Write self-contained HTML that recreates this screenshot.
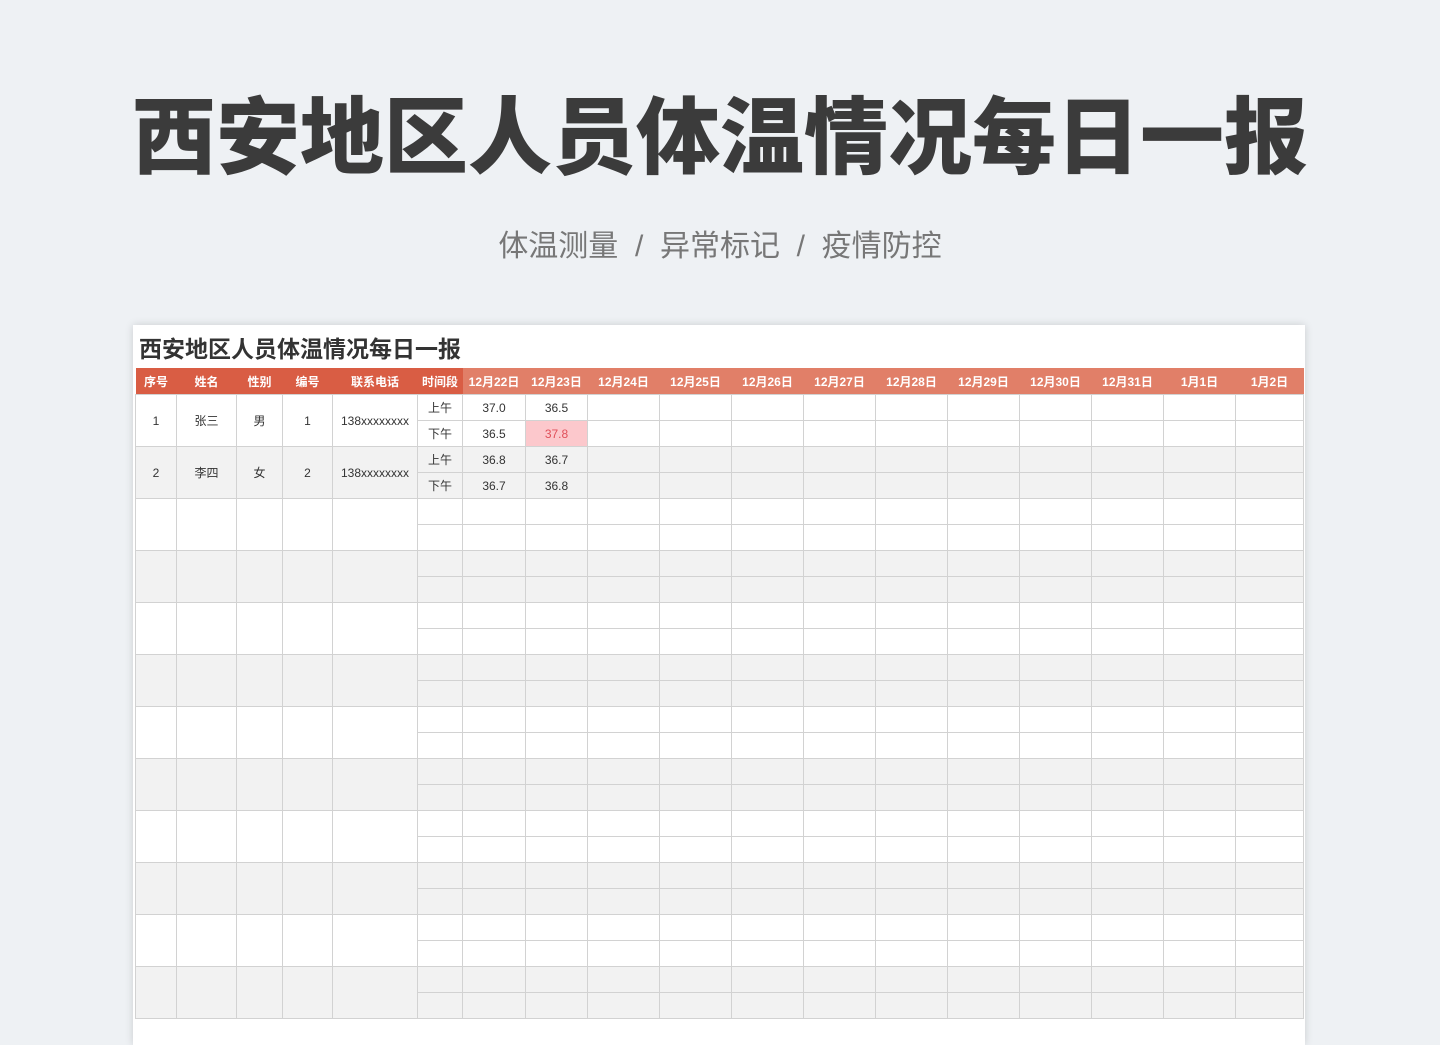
<!DOCTYPE html>
<html><head><meta charset="utf-8"><style>
body{margin:0;width:1440px;height:1018px;overflow:hidden;background:#eef1f4;font-family:"Liberation Sans","Noto Sans CJK SC",sans-serif;position:relative}
h1{position:absolute;top:83px;left:0;width:1440px;text-align:center;margin:0;font-size:84px;line-height:110px;font-weight:900;color:#3b3b3b}
.sub{position:absolute;top:227px;left:0;width:1440px;text-align:center;font-size:30px;color:#777;line-height:40px}
.card{position:absolute;left:133px;top:325px;width:1172px;height:720px;background:#fff;box-shadow:0 0 8px rgba(0,0,0,.15)}
.t{position:absolute;left:6px;top:10px;font-size:23px;font-weight:bold;color:#333;line-height:28px}
table{position:absolute;left:2px;top:43px;border-collapse:collapse;table-layout:fixed;width:1168px}
td,th{height:25px;padding:0;border:1px solid #d2d2d2;font-size:12px;color:#333;text-align:center;white-space:nowrap;overflow:hidden}
th{border:none;color:#fff;font-weight:bold;background:#d95d44;height:26px}
th.d{background:#e17f68}
tr.g td{background:#f2f2f2}
td.p{background:#fcc8cc!important;color:#e0505a}
</style></head><body>
<h1>西安地区人员体温情况每日一报</h1>
<div class="sub">体温测量 &nbsp;/&nbsp; 异常标记 &nbsp;/&nbsp; 疫情防控</div>
<div class="card"><div class="t">西安地区人员体温情况每日一报</div>
<table>
<colgroup><col style="width:41px"><col style="width:60px"><col style="width:46px"><col style="width:50px"><col style="width:85px"><col style="width:45px"><col style="width:63px"><col style="width:62px"><col style="width:72px"><col style="width:72px"><col style="width:72px"><col style="width:72px"><col style="width:72px"><col style="width:72px"><col style="width:72px"><col style="width:72px"><col style="width:72px"><col style="width:68px"></colgroup>
<tr><th>序号</th><th>姓名</th><th>性别</th><th>编号</th><th>联系电话</th><th>时间段</th><th class="d">12月22日</th><th class="d">12月23日</th><th class="d">12月24日</th><th class="d">12月25日</th><th class="d">12月26日</th><th class="d">12月27日</th><th class="d">12月28日</th><th class="d">12月29日</th><th class="d">12月30日</th><th class="d">12月31日</th><th class="d">1月1日</th><th class="d">1月2日</th></tr>
<tr><td rowspan="2">1</td><td rowspan="2">张三</td><td rowspan="2">男</td><td rowspan="2">1</td><td rowspan="2">138xxxxxxxx</td><td>上午</td><td>37.0</td><td>36.5</td><td></td><td></td><td></td><td></td><td></td><td></td><td></td><td></td><td></td><td></td></tr>
<tr><td>下午</td><td>36.5</td><td class="p">37.8</td><td></td><td></td><td></td><td></td><td></td><td></td><td></td><td></td><td></td><td></td></tr>
<tr class="g"><td rowspan="2">2</td><td rowspan="2">李四</td><td rowspan="2">女</td><td rowspan="2">2</td><td rowspan="2">138xxxxxxxx</td><td>上午</td><td>36.8</td><td>36.7</td><td></td><td></td><td></td><td></td><td></td><td></td><td></td><td></td><td></td><td></td></tr>
<tr class="g"><td>下午</td><td>36.7</td><td>36.8</td><td></td><td></td><td></td><td></td><td></td><td></td><td></td><td></td><td></td><td></td></tr>
<tr><td rowspan="2"></td><td rowspan="2"></td><td rowspan="2"></td><td rowspan="2"></td><td rowspan="2"></td><td></td><td></td><td></td><td></td><td></td><td></td><td></td><td></td><td></td><td></td><td></td><td></td><td></td></tr>
<tr><td></td><td></td><td></td><td></td><td></td><td></td><td></td><td></td><td></td><td></td><td></td><td></td><td></td></tr>
<tr class="g"><td rowspan="2"></td><td rowspan="2"></td><td rowspan="2"></td><td rowspan="2"></td><td rowspan="2"></td><td></td><td></td><td></td><td></td><td></td><td></td><td></td><td></td><td></td><td></td><td></td><td></td><td></td></tr>
<tr class="g"><td></td><td></td><td></td><td></td><td></td><td></td><td></td><td></td><td></td><td></td><td></td><td></td><td></td></tr>
<tr><td rowspan="2"></td><td rowspan="2"></td><td rowspan="2"></td><td rowspan="2"></td><td rowspan="2"></td><td></td><td></td><td></td><td></td><td></td><td></td><td></td><td></td><td></td><td></td><td></td><td></td><td></td></tr>
<tr><td></td><td></td><td></td><td></td><td></td><td></td><td></td><td></td><td></td><td></td><td></td><td></td><td></td></tr>
<tr class="g"><td rowspan="2"></td><td rowspan="2"></td><td rowspan="2"></td><td rowspan="2"></td><td rowspan="2"></td><td></td><td></td><td></td><td></td><td></td><td></td><td></td><td></td><td></td><td></td><td></td><td></td><td></td></tr>
<tr class="g"><td></td><td></td><td></td><td></td><td></td><td></td><td></td><td></td><td></td><td></td><td></td><td></td><td></td></tr>
<tr><td rowspan="2"></td><td rowspan="2"></td><td rowspan="2"></td><td rowspan="2"></td><td rowspan="2"></td><td></td><td></td><td></td><td></td><td></td><td></td><td></td><td></td><td></td><td></td><td></td><td></td><td></td></tr>
<tr><td></td><td></td><td></td><td></td><td></td><td></td><td></td><td></td><td></td><td></td><td></td><td></td><td></td></tr>
<tr class="g"><td rowspan="2"></td><td rowspan="2"></td><td rowspan="2"></td><td rowspan="2"></td><td rowspan="2"></td><td></td><td></td><td></td><td></td><td></td><td></td><td></td><td></td><td></td><td></td><td></td><td></td><td></td></tr>
<tr class="g"><td></td><td></td><td></td><td></td><td></td><td></td><td></td><td></td><td></td><td></td><td></td><td></td><td></td></tr>
<tr><td rowspan="2"></td><td rowspan="2"></td><td rowspan="2"></td><td rowspan="2"></td><td rowspan="2"></td><td></td><td></td><td></td><td></td><td></td><td></td><td></td><td></td><td></td><td></td><td></td><td></td><td></td></tr>
<tr><td></td><td></td><td></td><td></td><td></td><td></td><td></td><td></td><td></td><td></td><td></td><td></td><td></td></tr>
<tr class="g"><td rowspan="2"></td><td rowspan="2"></td><td rowspan="2"></td><td rowspan="2"></td><td rowspan="2"></td><td></td><td></td><td></td><td></td><td></td><td></td><td></td><td></td><td></td><td></td><td></td><td></td><td></td></tr>
<tr class="g"><td></td><td></td><td></td><td></td><td></td><td></td><td></td><td></td><td></td><td></td><td></td><td></td><td></td></tr>
<tr><td rowspan="2"></td><td rowspan="2"></td><td rowspan="2"></td><td rowspan="2"></td><td rowspan="2"></td><td></td><td></td><td></td><td></td><td></td><td></td><td></td><td></td><td></td><td></td><td></td><td></td><td></td></tr>
<tr><td></td><td></td><td></td><td></td><td></td><td></td><td></td><td></td><td></td><td></td><td></td><td></td><td></td></tr>
<tr class="g"><td rowspan="2"></td><td rowspan="2"></td><td rowspan="2"></td><td rowspan="2"></td><td rowspan="2"></td><td></td><td></td><td></td><td></td><td></td><td></td><td></td><td></td><td></td><td></td><td></td><td></td><td></td></tr>
<tr class="g"><td></td><td></td><td></td><td></td><td></td><td></td><td></td><td></td><td></td><td></td><td></td><td></td><td></td></tr>
</table></div>
</body></html>
